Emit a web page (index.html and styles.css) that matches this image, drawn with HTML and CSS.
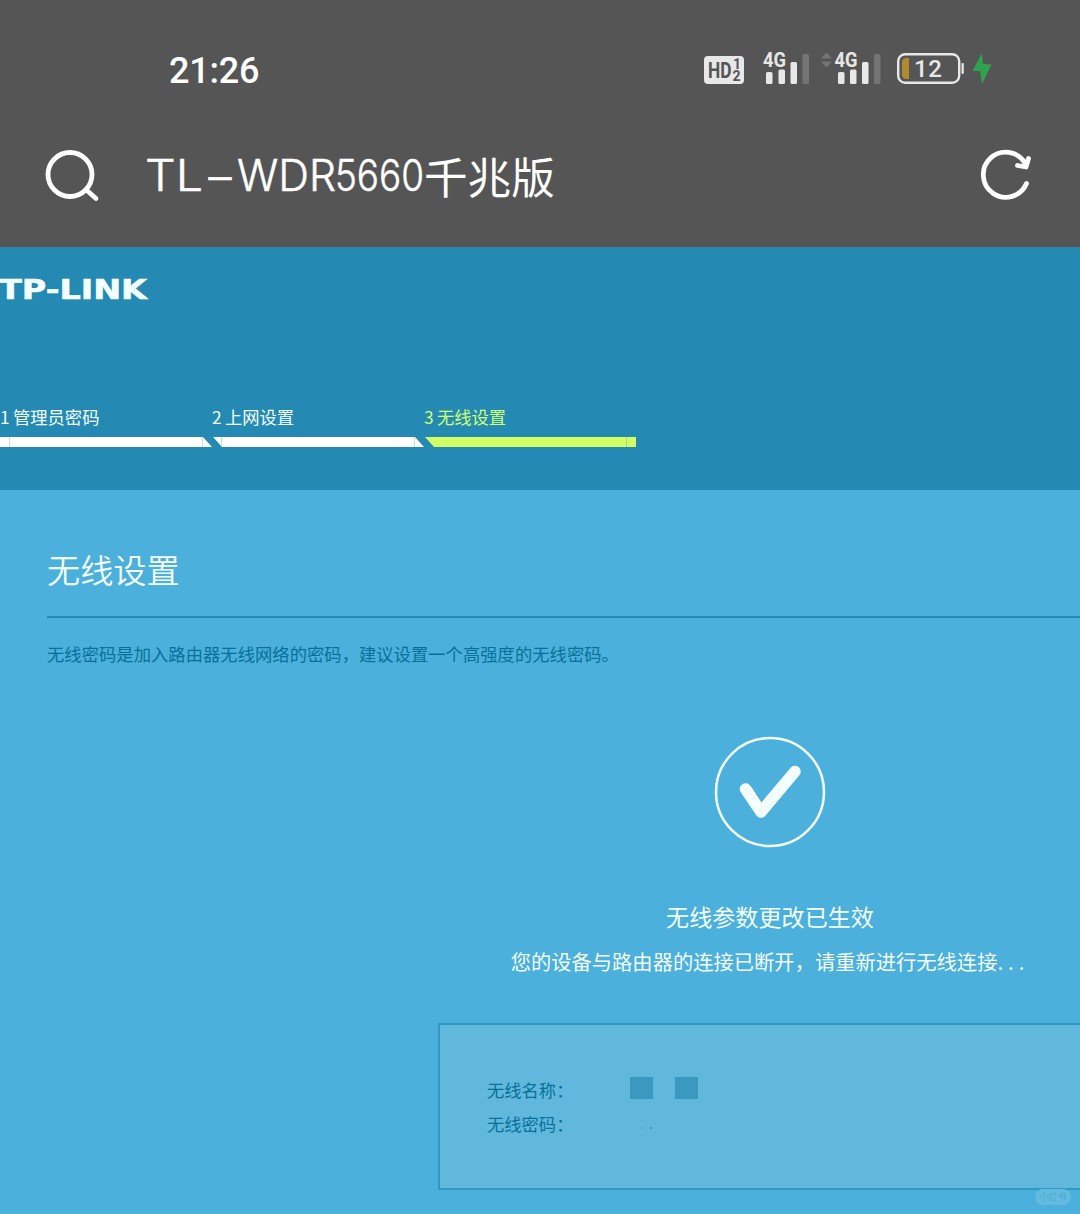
FILE: index.html
```html
<!DOCTYPE html>
<html lang="zh-CN">
<head>
    <meta charset="UTF-8">
    <meta name="viewport" content="width=device-width, initial-scale=1.0">
    <title>TL-WDR5660千兆版</title>
    <link rel="stylesheet" href="styles.css">
</head>
<body>

    <!-- Browser top -->
    <div class="browser">
        <div class="status-bar">
            <span class="time">21:26</span>
            <div class="status-icons">
                <svg class="hd" width="40" height="40" viewBox="0 0 40 40">
                    <rect x="0" y="10" width="40" height="28" rx="4" fill="#e8e8e8"/>
                    <text x="4" y="32" class="hd-text" textLength="23.500" lengthAdjust="spacingAndGlyphs">HD</text>
                    <text x="29" y="23" class="hd-num">1</text>
                    <text x="28.500" y="35" class="hd-num">2</text>
                </svg>
                <svg class="signal" width="48" height="40" viewBox="0 0 48 40">
                    <text x="1" y="21" class="net" textLength="23" lengthAdjust="spacingAndGlyphs">4G</text>
                    <rect x="4" y="26" width="6.5" height="12" rx="1.5" fill="#e8e8e8"/>
                    <rect x="16.5" y="23.5" width="6.5" height="14.5" rx="1.5" fill="#e8e8e8"/>
                    <rect x="28.5" y="16" width="6.5" height="22" rx="1.5" fill="#e8e8e8"/>
                    <rect x="40.5" y="8" width="6.5" height="30" rx="1.5" fill="#747474"/>
                </svg>
                <svg class="signal-two" width="60" height="40" viewBox="0 0 60 40">
                    <path d="M0 12.500 5.500 6.500 11 12.500ZM0 15.500 5.500 21.500 11 15.500Z" fill="#747474"/>
                    <text x="13.500" y="21" class="net" textLength="23" lengthAdjust="spacingAndGlyphs">4G</text>
                    <rect x="17" y="26" width="6.5" height="12" rx="1.5" fill="#e8e8e8"/>
                    <rect x="29" y="23.5" width="6.5" height="14.5" rx="1.5" fill="#e8e8e8"/>
                    <rect x="41" y="16" width="6.5" height="22" rx="1.5" fill="#e8e8e8"/>
                    <rect x="53" y="8" width="6.5" height="30" rx="1.5" fill="#747474"/>
                </svg>
                <svg class="battery" width="68" height="40" viewBox="0 0 68 40">
                    <rect x="1.2" y="8.200" width="61" height="28.600" rx="7" fill="none" stroke="#e8e8e8" stroke-width="2.400"/>
                    <path d="M12 12v21H9Q5 33 5 28V17Q5 12 9 12Z" fill="#b08a2e"/>
                    <text x="17" y="31" class="percent" textLength="28" lengthAdjust="spacing">12</text>
                    <rect x="64.500" y="17" width="2.300" height="11" rx="1" fill="#e8e8e8"/>
                </svg>
                <svg class="bolt" width="20" height="40" viewBox="0 0 20 40">
                    <path d="M10 7 .5 25H8L10 38 19.500 18.500 11 18Z" fill="#2fa24d"/>
                </svg>
            </div>
        </div>
        <div class="address-bar">
            <svg class="search" width="56" height="54" viewBox="0 0 56 54" fill="none" stroke="#fff" stroke-width="4.800" stroke-linecap="round">
                <circle cx="25" cy="25.500" r="22"/>
                <path d="M42 41.500 51 49.500"/>
            </svg>
            <div class="page-name">
                <svg width="279" height="60" viewBox="0 0 279 60">
                    <g class="name-latin">
                        <text x="-1" y="44.500" textLength="58" lengthAdjust="spacingAndGlyphs">TL</text>
                        <text x="57" y="44.500" textLength="34" lengthAdjust="spacingAndGlyphs">−</text>
                        <text x="91" y="44.500" textLength="99" lengthAdjust="spacingAndGlyphs">WDR</text>
                        <text x="189" y="44.500" textLength="89" lengthAdjust="spacingAndGlyphs">5660</text>
                    </g>
                </svg><span>千兆版</span>
            </div>
            <svg class="reload" width="56" height="54" viewBox="0 0 56 54" fill="none" stroke="#fff" stroke-width="4.800" stroke-linecap="round" stroke-linejoin="round">
                <path d="M46.500 34.500A22.500 22.500 0 1 1 45 14"/>
                <path d="M37.500 16.500 46 18 48.500 9.500"/>
            </svg>
        </div>
    </div>

    <!-- Router header with wizard steps -->
    <header>
        <svg class="logo" width="150" height="24" viewBox="0 0 150 24">
            <text x="-1" y="22" textLength="148" lengthAdjust="spacingAndGlyphs">TP-LINK</text>
        </svg>
        <ul class="steps">
            <li><span><b>1</b>管理员密码</span><i class="bar bar-first"></i></li>
            <li><span><b>2</b>上网设置</span><i class="bar"></i></li>
            <li class="active"><span><b>3</b>无线设置</span><i class="bar bar-last"></i></li>
        </ul>
    </header>

    <main>
        <div class="content">
            <h1>无线设置</h1>
            <p class="desc">无线密码是加入路由器无线网络的密码，建议设置一个高强度的无线密码。</p>

            <div class="result">
                <svg class="check" width="112" height="112" viewBox="0 0 112 112" fill="none" stroke="#f4ffff">
                    <circle cx="56" cy="56" r="54" stroke-width="2.500"/>
                    <path d="M31.500 53 47 76 81 35.500" stroke-width="11.500" stroke-linecap="round" stroke-linejoin="round"/>
                    <path d="M34 53 47 74 60 58" stroke-width="8" stroke-linejoin="round"/>
                </svg>
                <h2>无线参数更改已生效</h2>
                <p>您的设备与路由器的连接已断开，请重新进行无线连接<span class="dots">...</span></p>
            </div>

            <div class="info">
                <div class="row">
                    <span class="label">无线名称：</span>
                    <span class="mask"></span>
                    <span class="mask"></span>
                </div>
                <div class="row">
                    <span class="label">无线密码：</span>
                    <span class="secret"><i></i><i></i></span>
                </div>
            </div>
        </div>
        <span class="watermark">小红书</span>
    </main>

</body>
</html>
```

FILE: styles.css
```css
* {
    box-sizing: border-box;
    margin: 0;
    padding: 0;
}

body {
    width: 1080px;
    font-family: "Noto Sans CJK SC", sans-serif;
    font-weight: 400;
    background-color: #4bb0db;
    color: #f4ffff;
}

svg {
    display: block;
    flex: none;
    overflow: visible;
}

/* Browser top */
.browser {
    height: 247px;
    background-color: #555;
    color: #fff;
}

.status-bar {
    display: flex;
    justify-content: space-between;
    height: 130px;
    padding: 46px 88px 0 169px;
}

.time {
    font: 500 36px/50px Roboto, sans-serif;
    letter-spacing: -0.2px;
}

.status-icons {
    display: flex;
}

.signal {
    margin-left: 18px;
}

.signal-two {
    margin-left: 11px;
}

.battery {
    margin-left: 16px;
}

.bolt {
    margin-left: 7px;
}

.status-icons text {
    font-family: Roboto, sans-serif;
    font-weight: 700;
    fill: #e8e8e8;
}

.status-icons .hd-text {
    font-size: 22px;
    fill: #555;
}

.status-icons .hd-num {
    font-size: 14px;
    fill: #555;
}

.status-icons .net {
    font-size: 20px;
}

.status-icons .percent {
    font-size: 24px;
    font-weight: 500;
}

.address-bar {
    display: flex;
    align-items: center;
    height: 92px;
    padding: 0 44px 0 45px;
}

.page-name {
    display: flex;
    align-items: center;
    flex: 1;
    margin-left: 45px;
    font-size: 43.6px;
    line-height: 60px;
}

.page-name span {
    margin: -2px 0 0 -1px;
}

.name-latin {
    font-family: Inter, sans-serif;
    font-size: 43px;
    font-weight: 300;
    fill: #fff;
    stroke: #fff;
    stroke-width: 0.5px;
}

/* Router header */
header {
    height: 243px;
    padding-top: 30px;
    background-color: #248ab3;
}

.logo text {
    font: bold 26.5px "DejaVu Sans", sans-serif;
    fill: #f4ffff;
    stroke: #f4ffff;
    stroke-width: 0.6px;
}

.steps {
    display: flex;
    margin-top: 103px;
    list-style: none;
}

.steps li {
    width: 212px;
    font-size: 17.3px;
    line-height: 26px;
}

.steps span {
    display: block;
    white-space: nowrap;
}

.steps b {
    display: inline-block;
    width: 13px;
    font-weight: 400;
}

.bar {
    display: block;
    height: 10px;
    margin-top: 7px;
    background: linear-gradient(90deg, transparent 9px, #c3dfeb 9px, #c3dfeb 10px, transparent 10px, transparent 202px, #c3dfeb 202px, #c3dfeb 203px, transparent 203px) #fff;
    clip-path: polygon(1px 0, 203px 0, 100% 100%, 10px 100%);
}

.bar-first {
    clip-path: polygon(0 0, 203px 0, 100% 100%, 0 100%);
}

.bar-last {
    clip-path: polygon(1px 0, 100% 0, 100% 100%, 10px 100%);
}

.active {
    color: #cfff72;
}

.active .bar {
    background: linear-gradient(90deg, transparent 202px, #a9dc78 202px, #a9dc78 203px, transparent 203px) #d2ff65;
}

/* Page body, wider than the screen */
main {
    position: relative;
    height: 724px;
    overflow: hidden;
}

.content {
    width: 1540px;
    padding: 55px 47px 0;
}

h1 {
    height: 73px;
    border-bottom: 2px solid #248ab3;
    font-size: 33.2px;
    font-weight: 350;
    line-height: 48px;
}

.desc {
    margin-top: 23px;
    font-size: 17.3px;
    line-height: 26px;
    letter-spacing: 0.05px;
    color: #087099;
}

.result {
    margin-top: 69px;
    text-align: center;
}

.check {
    margin: 0 auto;
}

h2 {
    margin-top: 51px;
    font-size: 23.1px;
    font-weight: 400;
    line-height: 34px;
}

.result p {
    margin-top: 13px;
    font-size: 20.3px;
    line-height: 30px;
}

.dots {
    letter-spacing: 5px;
}

.info {
    width: 664px;
    height: 167px;
    margin: 47px auto 0;
    padding: 48px 47px;
    border: 2px solid #3198c1;
    background-color: #60b8dd;
    color: #087099;
}

.row {
    display: flex;
    height: 34px;
    font-size: 17.3px;
    line-height: 34px;
}

.label {
    width: 143px;
}

.mask {
    width: 23px;
    height: 22px;
    margin: 4px 22px 0 0;
    background-color: #3b98bf;
}

.secret {
    display: flex;
    gap: 7px;
    padding: 20px 0 0 11px;
}

.secret i {
    width: 2px;
    height: 2px;
    background-color: #3b98bf;
}

.secret i:first-child {
    opacity: 0.4;
}

.watermark {
    position: absolute;
    right: 9px;
    bottom: 9px;
    width: 36px;
    border-radius: 8px;
    background-color: #62bbe0;
    color: #4dabd3;
    font-size: 9px;
    line-height: 16px;
    text-align: center;
}
```
